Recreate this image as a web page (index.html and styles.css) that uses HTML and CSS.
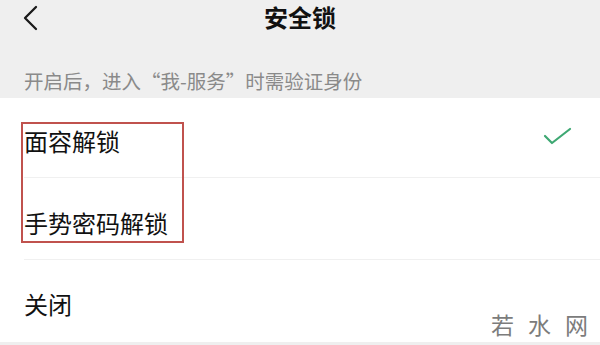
FILE: index.html
```html
<!DOCTYPE html>
<html lang="zh-CN">
<head>
<meta charset="utf-8">
<title>安全锁</title>
<link rel="stylesheet" href="styles.css">
</head>
<body>
<div class="page">
  <header class="topbar">
    <span class="back">
      <svg width="20" height="28" viewBox="0 0 20 28"><polyline points="14,4 3,15 14,26" fill="none" stroke="#1a1a1a" stroke-width="2.3" stroke-linecap="round" stroke-linejoin="round"/></svg>
    </span>
    <h1 class="title">安全锁</h1>
    <span class="spacer"></span>
  </header>
  <p class="hint">开启后，进入“我-服务”时需验证身份</p>
  <ul class="list">
    <li class="row row-first">
      <span class="label">面容解锁</span>
      <svg class="check" width="30" height="20" viewBox="0 0 30 20"><polyline points="2,9 9,16 27,2" fill="none" stroke="#3ea873" stroke-width="2.2" stroke-linecap="round" stroke-linejoin="round"/></svg>
    </li>
    <li class="row row-second"><span class="label">手势密码解锁</span></li>
    <li class="row row-last"><span class="label">关闭</span></li>
  </ul>
  <div class="highlight"></div>
  <div class="watermark"><span>若</span><span>水</span><span>网</span></div>
</div>
</body>
</html>
```
FILE: styles.css
```css
html, body {
  margin: 0;
  padding: 0;
}
body {
  background: #efefef;
  font-family: "Noto Sans CJK SC", "Noto Sans", sans-serif;
  color: #111;
  width: 600px;
  height: 345px;
  overflow: hidden;
}
.page {
  position: relative;
  width: 600px;
  height: 345px;
  overflow: hidden;
}
.topbar {
  height: 34px;
  display: grid;
  grid-template-columns: 60px 1fr 60px;
  align-items: center;
}
.back {
  display: flex;
  align-items: center;
  padding-left: 22px;
  height: 34px;
}
.title {
  margin: 0;
  text-align: center;
  font-size: 24px;
  font-weight: 700;
  line-height: 32px;
  color: #111;
}
.hint {
  margin: 0;
  height: 64px;
  box-sizing: border-box;
  padding: 35px 0 0 24px;
  font-size: 19.5px;
  line-height: 24px;
  color: #8a8a8a;
  white-space: nowrap;
}
.list {
  list-style: none;
  margin: 0;
  padding: 0;
  background: #fff;
}
.row {
  box-sizing: border-box;
  padding: 5px 27px 0 24px;
  display: flex;
  align-items: center;
  justify-content: space-between;
  position: relative;
}
.row-first {
  height: 80px;
}
.row-second {
  height: 82px;
  padding-top: 8px;
}
.row-last {
  height: 82px;
}
.row-first::after,
.row-second::after {
  content: "";
  position: absolute;
  left: 24px;
  right: 0;
  bottom: 0;
  height: 1px;
  background: #f0f0f0;
}
.label {
  font-size: 24px;
  line-height: 30px;
  color: #111;
  white-space: nowrap;
}
.check {
  margin-top: -8px;
}
.highlight {
  position: absolute;
  left: 21px;
  top: 122px;
  width: 163px;
  height: 121px;
  box-sizing: border-box;
  border: 2px solid #c0524e;
}
.watermark {
  position: absolute;
  left: 491px;
  top: 308px;
  display: flex;
  gap: 14px;
  font-size: 23px;
  line-height: 32px;
  color: #7c7c7c;
  white-space: nowrap;
}
```
